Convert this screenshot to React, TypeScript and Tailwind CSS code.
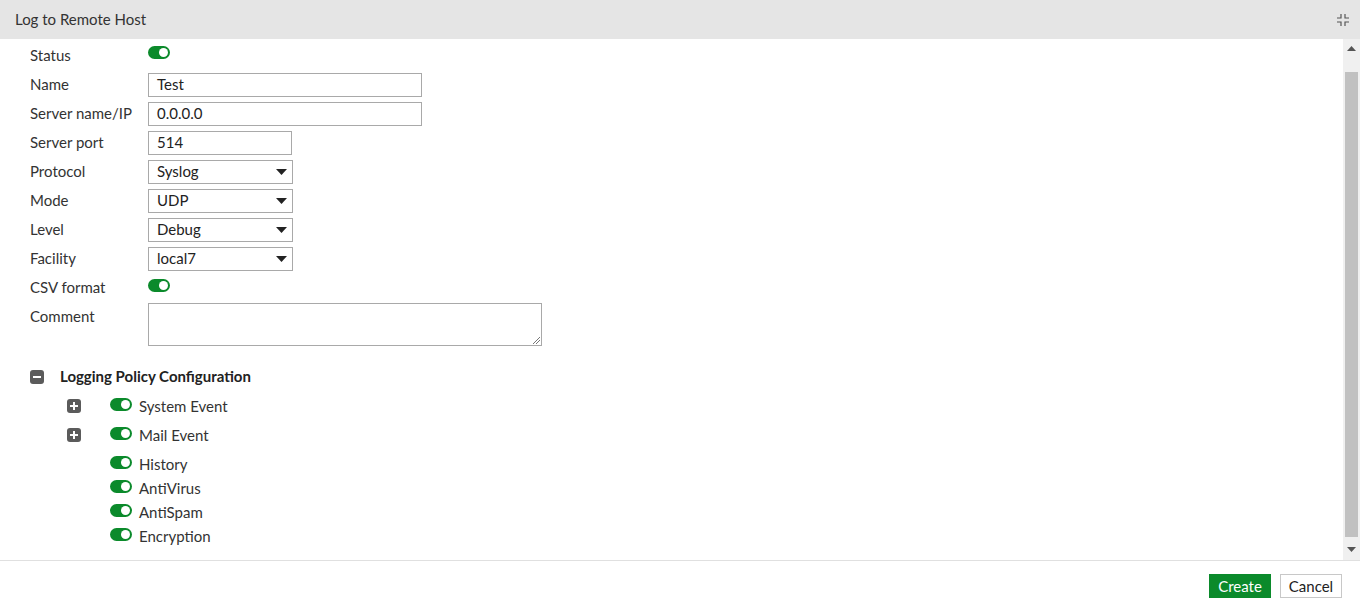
import React from 'react';

const font = { fontFamily: 'Lato, "Open Sans", sans-serif' };

const Toggle: React.FC = () => (
    <span className="relative inline-block w-[22px] h-[13px] rounded-full bg-[#0b8a2b]">
        <span className="absolute right-[2px] top-[2px] w-[9px] h-[9px] rounded-full bg-white" />
    </span>
);

const TextInput: React.FC<{ value: string; width: string }> = ({ value, width }) => (
    <div className={`${width} h-[24px] border border-[#a9a9a9] bg-white px-[8px] flex items-center text-[15px] text-[#222]`}>
        {value}
    </div>
);

const Select: React.FC<{ value: string }> = ({ value }) => (
    <div className="w-[145px] h-[24px] border border-[#a9a9a9] bg-white pl-[8px] pr-[5px] flex items-center justify-between text-[15px] text-[#222]">
        <span>{value}</span>
        <svg width="11" height="6" viewBox="0 0 11 6"><path d="M0 0h11L5.5 6z" fill="#222" /></svg>
    </div>
);

const Row: React.FC<{ label: string; children: React.ReactNode }> = ({ label, children }) => (
    <div className="flex items-center h-[29px]">
        <div className="w-[118px] text-[15px] text-[#333]">{label}</div>
        {children}
    </div>
);

const Box: React.FC<{ minus?: boolean }> = ({ minus }) => (
    <span className="relative inline-block w-[14px] h-[14px] rounded-[3px] bg-[#5b5b5b]">
        <span className="absolute left-[3px] top-[6px] w-[8px] h-[2px] bg-white" />
        {!minus && <span className="absolute left-[6px] top-[3px] w-[2px] h-[8px] bg-white" />}
    </span>
);

const PolicyItem: React.FC<{ label: string; expandable?: boolean; spaced?: boolean }> = ({ label, expandable, spaced }) => (
    <div className={`flex items-center h-[24px] ${spaced ? 'mt-[5px]' : ''}`}>
        <div className="w-[80px] pl-[37px] flex items-center">{expandable && <Box />}</div>
        <div className="w-[29px] flex items-center -mt-[3px]"><Toggle /></div>
        <span className="text-[15px] text-[#333]">{label}</span>
    </div>
);

export default function App() {
    return (
        <div className="w-[1360px] h-[611px] flex flex-col bg-white overflow-hidden" style={font}>
            {/* Header */}
            <div className="h-[39px] bg-[#e5e5e5] flex items-center justify-between pl-[15px] pr-[10px] shrink-0">
                <span className="text-[15px] text-[#333]">Log to Remote Host</span>
                <svg width="14" height="14" viewBox="0 0 14 14" fill="none" stroke="#555" strokeWidth="1.2">
                    <path d="M5 1v4H1M9 1v4h4M5 13V9H1M9 13V9h4" />
                </svg>
            </div>

            {/* Body */}
            <div className="flex h-[521px] shrink-0">
                <div className="flex-1 pl-[30px] pt-[2px]">
                    <Row label="Status"><div className="-mt-[7px] flex"><Toggle /></div></Row>
                    <Row label="Name"><TextInput value="Test" width="w-[274px]" /></Row>
                    <Row label="Server name/IP"><TextInput value="0.0.0.0" width="w-[274px]" /></Row>
                    <Row label="Server port"><TextInput value="514" width="w-[144px]" /></Row>
                    <Row label="Protocol"><Select value="Syslog" /></Row>
                    <Row label="Mode"><Select value="UDP" /></Row>
                    <Row label="Level"><Select value="Debug" /></Row>
                    <Row label="Facility"><Select value="local7" /></Row>
                    <Row label="CSV format"><div className="-mt-[4px] flex"><Toggle /></div></Row>
                    <div className="flex mt-[1px]">
                        <div className="w-[118px] text-[15px] text-[#333] pt-[2px]">Comment</div>
                        <div className="relative w-[394px] h-[43px] border border-[#a9a9a9]">
                            <svg className="absolute right-[1px] bottom-[1px]" width="8" height="8" viewBox="0 0 8 8" stroke="#777" strokeWidth="1">
                                <path d="M1 8L8 1M4 8L8 4" />
                            </svg>
                        </div>
                    </div>

                    <div className="flex items-center h-[29px] mt-[16px]">
                        <div className="w-[30px] flex items-center"><Box minus /></div>
                        <span className="text-[15px] font-bold text-[#222]">Logging Policy Configuration</span>
                    </div>
                    <div className="mt-[3px]">
                        <PolicyItem label="System Event" expandable />
                        <PolicyItem label="Mail Event" expandable spaced />
                        <PolicyItem label="History" spaced />
                        <PolicyItem label="AntiVirus" />
                        <PolicyItem label="AntiSpam" />
                        <PolicyItem label="Encryption" />
                    </div>
                </div>

                {/* Scrollbar */}
                <div className="w-[17px] bg-[#f0f0f0] flex flex-col items-center">
                    <div className="h-[17px] flex items-center justify-center mt-[1px]">
                        <svg width="9" height="5" viewBox="0 0 9 5"><path d="M0 5h9L4.5 0z" fill="#555" /></svg>
                    </div>
                    <div className="w-[13px] h-[465px] mt-[15px] bg-[#c1c1c1]" />
                    <div className="flex-1" />
                    <div className="h-[17px] flex items-center justify-center mb-[2px]">
                        <svg width="9" height="5" viewBox="0 0 9 5"><path d="M0 0h9L4.5 5z" fill="#555" /></svg>
                    </div>
                </div>
            </div>

            {/* Footer */}
            <div className="flex-1 border-t border-[#e0e0e0] flex items-start justify-end gap-[9px] pr-[18px] pt-[13px]">
                <button className="w-[62px] h-[24px] bg-[#0b8a2b] text-white text-[15px] border border-[#0b8a2b]">Create</button>
                <button className="w-[62px] h-[24px] bg-white text-[#222] text-[15px] border border-[#c8c8c8]">Cancel</button>
            </div>
        </div>
    );
}
